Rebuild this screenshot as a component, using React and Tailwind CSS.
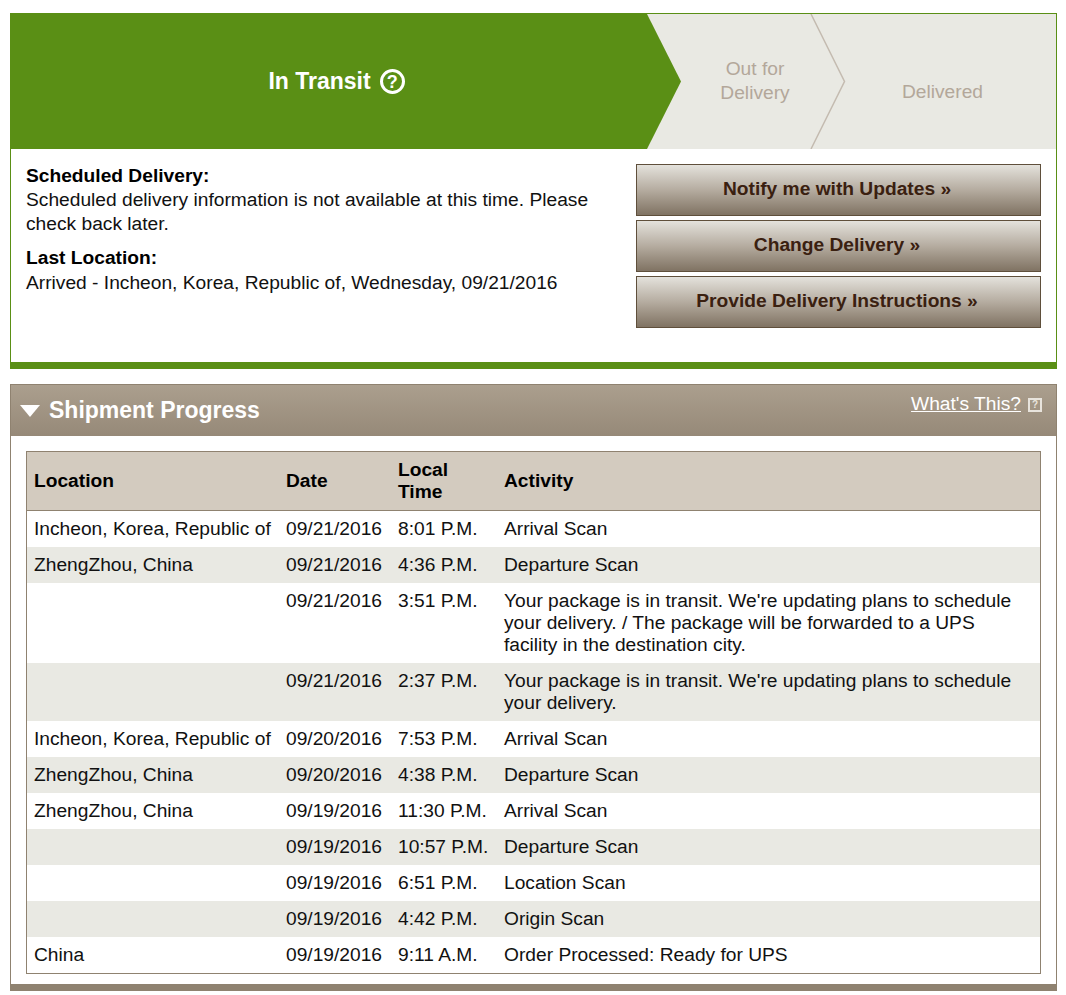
import React from 'react';

const rows = [
  { location: 'Incheon, Korea, Republic of', date: '09/21/2016', time: '8:01 P.M.', activity: 'Arrival Scan' },
  { location: 'ZhengZhou, China', date: '09/21/2016', time: '4:36 P.M.', activity: 'Departure Scan' },
  { location: '', date: '09/21/2016', time: '3:51 P.M.', activity: "Your package is in transit. We're updating plans to schedule your delivery. / The package will be forwarded to a UPS facility in the destination city." },
  { location: '', date: '09/21/2016', time: '2:37 P.M.', activity: "Your package is in transit. We're updating plans to schedule your delivery." },
  { location: 'Incheon, Korea, Republic of', date: '09/20/2016', time: '7:53 P.M.', activity: 'Arrival Scan' },
  { location: 'ZhengZhou, China', date: '09/20/2016', time: '4:38 P.M.', activity: 'Departure Scan' },
  { location: 'ZhengZhou, China', date: '09/19/2016', time: '11:30 P.M.', activity: 'Arrival Scan' },
  { location: '', date: '09/19/2016', time: '10:57 P.M.', activity: 'Departure Scan' },
  { location: '', date: '09/19/2016', time: '6:51 P.M.', activity: 'Location Scan' },
  { location: '', date: '09/19/2016', time: '4:42 P.M.', activity: 'Origin Scan' },
  { location: 'China', date: '09/19/2016', time: '9:11 A.M.', activity: 'Order Processed: Ready for UPS' }
];

const buttons = ['Notify me with Updates »', 'Change Delivery »', 'Provide Delivery Instructions »'];

const StatusHeader = () => (
  <div className="relative flex h-[135px] bg-[#e9e9e3]">
    <div className="flex w-[670px] items-center justify-center gap-[9px] bg-[#5a8f15] pr-[19px] [clip-path:polygon(0_0,636px_0,100%_50%,636px_100%,0_100%)]">
      <span className="text-[23px] leading-none font-bold text-white">In Transit</span>
      <span className="flex h-[25px] w-[25px] items-center justify-center rounded-full border-[3px] border-white text-[18px] leading-none font-bold text-white">?</span>
    </div>
    <div className="flex w-[148px] items-center justify-center pb-[2px] text-center leading-[24px] text-[#b3a79a]">
      Out for<br />Delivery
    </div>
    <div className="flex flex-1 items-center justify-center pt-[20px] leading-[24px] text-[#b3a79a]">
      Delivered
    </div>
    <svg className="absolute top-0 left-[799px]" width="36" height="135" fill="none" stroke="#c4bbb0" strokeWidth="1.5">
      <path d="M1 0 L34.5 67.5 L1 135" />
    </svg>
  </div>
);

const App = () => {
  return (
    <div className="min-h-[995px] bg-white pt-[13px] pr-[9px] pl-[10px] font-['Liberation_Sans',Arial,sans-serif] text-[19.2px] text-[#111]">
      <div className="h-[356px] border-x border-t border-b-[7px] border-[#5a8f15]">
        <StatusHeader />
        <div className="flex justify-between pt-[15px] pr-[15px] pl-[15px]">
          <div className="w-[590px] leading-[24px]">
            <div className="font-bold text-black">Scheduled Delivery:</div>
            <div>Scheduled delivery information is not available at this time. Please check back later.</div>
            <div className="mt-[10px] font-bold text-black">Last Location:</div>
            <div className="mt-[1px]">Arrived - Incheon, Korea, Republic of, Wednesday, 09/21/2016</div>
          </div>
          <div className="flex w-[405px] flex-col gap-1">
            {buttons.map((label) => (
              <button
                key={label}
                className="h-[52px] border border-[#5f4f3b] bg-linear-to-b from-[#e4e2dc] via-[#b5aca0] to-[#807363] pr-[3px] pb-[2px] text-[19.2px] font-bold text-[#3a2010]"
              >
                {label}
              </button>
            ))}
          </div>
        </div>
      </div>

      <div className="mt-[15px] h-[607px] border-x border-t border-b-[7px] border-[#8f8270]">
        <div className="flex h-[51px] justify-between bg-linear-to-b from-[#ab9f8e] to-[#968978] pr-[14px] pl-[9px]">
          <div className="flex items-center gap-[9px]">
            <svg width="20" height="12" viewBox="0 0 20 12" fill="#fff"><path d="M0 0 H20 L10 12 Z" /></svg>
            <span className="text-[23px] leading-none font-bold text-white">Shipment Progress</span>
          </div>
          <div className="flex items-start gap-[7px] pt-[8px]">
            <a className="leading-[22px] text-white underline">What's This?</a>
            <span className="mt-[5px] flex h-[14px] w-[14px] items-center justify-center border-2 border-[#e8e4dd] text-[10px] leading-none font-bold text-[#e8e4dd]">?</span>
          </div>
        </div>
        <div className="px-[15px] pt-[15px]">
          <table className="w-full table-fixed border-collapse border border-[#8f8270] leading-[22px]">
            <colgroup>
              <col className="w-[252.5px]" />
              <col className="w-[112px]" />
              <col className="w-[106px]" />
              <col />
            </colgroup>
            <thead>
              <tr className="border-b border-[#8f8270] bg-[#d3cbbf] text-left text-black">
                <th className="py-[7px] pl-[7px] font-bold">Location</th>
                <th className="py-[7px] pl-[7px] font-bold">Date</th>
                <th className="py-[7px] pl-[7px] font-bold">Local<br />Time</th>
                <th className="py-[7px] pl-[7px] font-bold">Activity</th>
              </tr>
            </thead>
            <tbody>
              {rows.map((row, index) => (
                <tr key={index} className={index % 2 === 1 ? 'bg-[#e9e9e3]' : 'bg-white'}>
                  <td className="py-[7px] pl-[7px] align-top whitespace-nowrap">{row.location}</td>
                  <td className="py-[7px] pl-[7px] align-top">{row.date}</td>
                  <td className="py-[7px] pl-[7px] align-top whitespace-nowrap">{row.time}</td>
                  <td className="py-[7px] pr-[20px] pl-[7px] align-top">{row.activity}</td>
                </tr>
              ))}
            </tbody>
          </table>
        </div>
      </div>
    </div>
  );
};

export default App;
